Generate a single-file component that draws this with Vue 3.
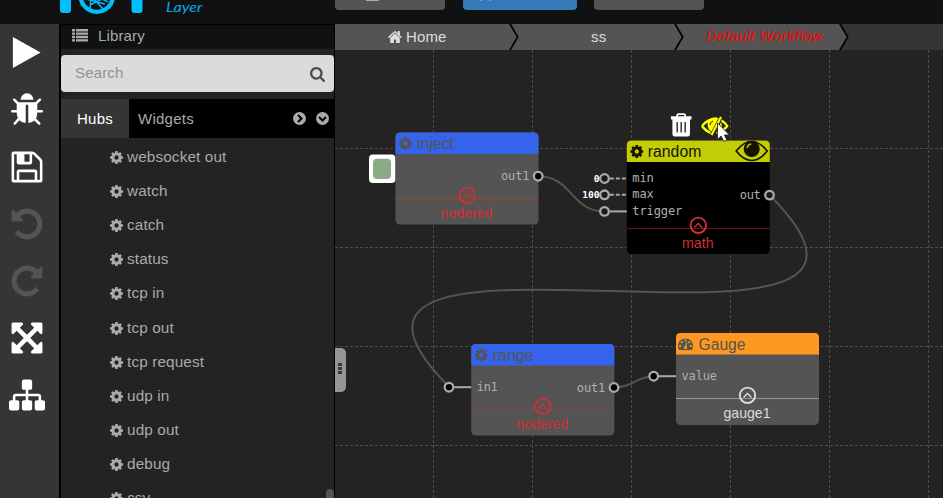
<script setup>
const icons = {
  cog: 'M1152 896q0-106-75-181t-181-75-181 75-75 181 75 181 181 75 181-75 75-181zm512-109v222q0 12-8 23t-20 13l-185 28q-19 54-39 91 35 50 107 138 10 12 10 25t-9 23q-27 37-99 108t-94 71q-12 0-26-9l-138-108q-44 23-91 38-16 136-29 186-7 28-36 28h-222q-14 0-24.5-8.5t-11.5-21.5l-28-184q-49-16-90-37l-141 107q-10 9-25 9-14 0-25-11-126-114-165-168-7-10-7-23 0-12 8-23 15-21 51-66.5t54-70.5q-27-50-41-99l-183-27q-13-2-21-12.5t-8-23.5v-222q0-12 8-23t19-13l186-28q14-46 39-92-40-57-107-138-10-12-10-24 0-10 9-23 26-36 98.5-107.5t94.5-71.5q13 0 26 10l138 107q44-23 91-38 16-136 29-186 7-28 36-28h222q14 0 24.5 8.5t11.5 21.5l28 184q49 16 90 37l142-107q9-9 24-9 13 0 25 10 129 119 165 170 7 8 7 22 0 12-8 23-15 21-51 66.5t-54 70.5q26 50 41 98l183 28q13 2 21 12.5t8 23.5z',
  home: 'M1472 992v480q0 26-19 45t-45 19h-384v-384h-256v384h-384q-26 0-45-19t-19-45v-480q0-1 .5-3t.5-3l575-474 575 474q1 2 1 6zm223-69l-62 74q-8 9-21 11h-3q-13 0-21-7l-692-577-692 577q-12 8-24 7-13-2-21-11l-62-74q-8-10-7-23.5t11-21.5l719-599q32-26 76-26t76 26l244 204v-195q0-14 9-23t23-9h192q14 0 23 9t9 23v408l219 182q10 8 11 21.5t-7 23.5z',
  search: 'M1216 832q0-185-131.5-316.5t-316.5-131.5-316.5 131.5-131.5 316.5 131.5 316.5 316.5 131.5 316.5-131.5 131.5-316.5zm512 832q0 52-38 90t-90 38q-54 0-90-38l-343-342q-179 124-399 124-143 0-273.5-55.5t-225-150-150-225-55.5-273.5 55.5-273.5 150-225 225-150 273.5-55.5 273.5 55.5 225 150 150 225 55.5 273.5q0 220-124 399l343 343q37 37 37 90z',
  gauge: 'M384 1152q0-53-37.5-90.5t-90.5-37.5-90.5 37.5-37.5 90.5 37.5 90.5 90.5 37.5 90.5-37.5 37.5-90.5zm192-448q0-53-37.5-90.5t-90.5-37.5-90.5 37.5-37.5 90.5 37.5 90.5 90.5 37.5 90.5-37.5 37.5-90.5zm428 481l101-382q6-26-7.5-48.5t-38.5-29.5-48 6.5-30 39.5l-101 382q-60 5-107 43.5t-63 98.5q-20 77 20 146t117 89 146-20 89-117q16-60-6-117t-72-91zm660-33q0-53-37.5-90.5t-90.5-37.5-90.5 37.5-37.5 90.5 37.5 90.5 90.5 37.5 90.5-37.5 37.5-90.5zm-640-640q0-53-37.5-90.5t-90.5-37.5-90.5 37.5-37.5 90.5 37.5 90.5 90.5 37.5 90.5-37.5 37.5-90.5zm448 192q0-53-37.5-90.5t-90.5-37.5-90.5 37.5-37.5 90.5 37.5 90.5 90.5 37.5 90.5-37.5 37.5-90.5zm320 448q0 261-141 483-19 29-54 29h-1402q-35 0-54-29-141-221-141-483 0-182 71-348t191-286 286-191 348-71 348 71 286 191 191 286 71 348z',
}

const undoPath = 'M1664 896q0 156-61 298t-164 245-245 164-298 61q-172 0-327-72.5t-264-204.5q-7-10-6.5-22.5t8.5-20.5l137-138q10-9 25-9 16 2 23 12 73 95 179 147t225 52q104 0 198.5-40.5t163.5-109.5 109.5-163.5 40.5-198.5-40.5-198.5-109.5-163.5-163.5-109.5-198.5-40.5q-98 0-188 35.5t-160 101.5l137 138q31 30 14 69-17 40-59 40h-448q-26 0-45-19t-19-45v-448q0-42 40-59 39-17 69 14l130 129q107-101 244.5-156.5t284.5-55.5q156 0 298 61t245 164 164 245 61 298z'

const tools = [
  { name: 'play', path: 'M110 0L1710 896L110 1792z' },
  { name: 'bug', path: 'M1696 960q0 26-19 45t-45 19h-224q0 171-67 290l208 209q19 19 19 45t-19 45q-18 19-45 19t-45-19l-198-197q-5 5-15 13t-42 28.5-65 36.5-82 29-97 13v-896h-128v896q-51 0-101.5-13.5t-87-33-66-39-43.5-32.5l-15-14-183 207q-20 21-48 21-24 0-43-16-19-18-20.5-44.5t15.5-46.5l202-227q-58-114-58-274h-224q-26 0-45-19t-19-45 19-45 45-19h224v-294l-173-173q-19-19-19-45t19-45 45-19 45 19l173 173h844l173-173q19-19 45-19t45 19 19 45-19 45l-173 173v294h224q26 0 45 19t19 45zm-480-576h-640q0-133 93.5-226.5t226.5-93.5 226.5 93.5 93.5 226.5z' },
  { name: 'save', path: 'M512 1536h768v-384h-768v384zm896 0h128v-896q0-14-10-38.5t-20-34.5l-281-281q-10-10-34-20t-39-10v416q0 40-28 68t-68 28h-576q-40 0-68-28t-28-68v-416h-128v1280h128v-416q0-40 28-68t68-28h832q40 0 68 28t28 68v416zm-384-928v-320q0-13-9.5-22.5t-22.5-9.5h-192q-13 0-22.5 9.5t-9.5 22.5v320q0 13 9.5 22.5t22.5 9.5h192q13 0 22.5-9.5t9.5-22.5zm640 32v928q0 40-28 68t-68 28h-1344q-40 0-68-28t-28-68v-1344q0-40 28-68t68-28h928q40 0 88 20t76 48l280 280q28 28 48 76t20 88z' },
  { name: 'undo', path: undoPath, off: true },
  { name: 'redo', path: undoPath, off: true, flip: true },
  { name: 'expand', path: 'M1411 541l-355 355 355 355 144-144q29-31 70-14 39 17 39 59v448q0 26-19 45t-45 19h-448q-42 0-59-40-17-39 14-69l144-144-355-355-355 355 144 144q31 30 14 69-17 40-59 40h-448q-26 0-45-19t-19-45v-448q0-42 40-59 39-17 69 14l144 144 355-355-355-355-144 144q-19 19-45 19-12 0-24-5-40-17-40-59v-448q0-26 19-45t45-19h448q42 0 59 40 17 39-14 69l-144 144 355 355 355-355-144-144q-31-30-14-69 17-40 59-40h448q26 0 45 19t19 45v448q0 42-39 59-13 5-25 5-26 0-45-19z' },
  { name: 'sitemap', path: 'M1792 1248v320q0 40-28 68t-68 28h-320q-40 0-68-28t-28-68v-320q0-40 28-68t68-28h96v-192h-512v192h96q40 0 68 28t28 68v320q0 40-28 68t-68 28h-320q-40 0-68-28t-28-68v-320q0-40 28-68t68-28h96v-192h-512v192h96q40 0 68 28t28 68v320q0 40-28 68t-68 28h-320q-40 0-68-28t-28-68v-320q0-40 28-68t68-28h96v-192q0-52 38-90t90-38h512v-192h-96q-40 0-68-28t-28-68v-320q0-40 28-68t68-28h320q40 0 68 28t28 68v320q0 40-28 68t-68 28h-96v192h512q52 0 90 38t38 90v192h96q40 0 68 28t28 68z' },
]

const hubs = ['websocket out', 'watch', 'catch', 'status', 'tcp in', 'tcp out', 'tcp request', 'udp in', 'udp out', 'debug', 'csv']

// Canvas coordinates: the origin is the top left corner of the workflow area.
const columns = [98.5, 197.5, 296.5, 395.5, 494.5, 593.5]
const rows = [98.5, 197.5, 296.5, 395.5]

const wires = [
  'M203.5 126.2C236.5 126.2 236.5 161.5 269.5 161.5',
  'M434.5 145C641.5 352 -92.5 130 114.5 337.2',
  'M279.5 337.2C299.5 337.2 299.5 326.5 319 326.5',
]

const nodes = [
  { id: 'inject', x: 60.5, y: 82.5, h: 92, head: '#3563eb', body: '#545454', ink: '#545454', icon: 'cog', labelW: 37, labelX: 21.5,
    sub: 'nodered', subW: 52, accent: '#d32f32', rule: '#a8402f', line: 66, ins: [], outs: [{ label: 'out1', y: 43.7, w: 28.5 }], dot: '#000' },
  { id: 'random', x: 291.8, y: 90.5, h: 113.5, head: '#c3cd06', body: '#000', ink: '#141400', icon: 'cog', labelW: 53.5, labelX: 21,
    sub: 'math', subW: 31.5, accent: '#d32f32', rule: '#6b1517', line: 88,
    ins: [{ label: 'min', y: 38.3, w: 21.5, value: '0', dash: true }, { label: 'max', y: 54.6, w: 21.5, value: '100', dash: true }, { label: 'trigger', y: 71.2, w: 50 }],
    outs: [{ label: 'out', y: 54.6, w: 21 }], dot: '#1b1b1b' },
  { id: 'range', x: 136.3, y: 294, h: 91.5, head: '#3563eb', body: '#545454', ink: '#545454', icon: 'cog', labelW: 40.5, labelX: 21.5,
    sub: 'nodered', subW: 52, accent: '#d32f32', rule: '#8e4040', line: 65.5, ins: [{ label: 'in1', y: 43.5, w: 21 }], outs: [{ label: 'out1', y: 43.5, w: 28.5 }], dot: '#000' },
  { id: 'Gauge', x: 341, y: 283, h: 92, head: '#ff9820', body: '#545454', ink: '#545454', icon: 'gauge', labelW: 47, labelX: 22.5,
    sub: 'gauge1', subW: 47, accent: '#dcdcdc', rule: '#969696', line: 65.5, ins: [{ label: 'value', y: 43.5, w: 35.5 }], outs: [], dot: '#000' },
]

const crumbs = [
  { label: 'Home', icon: true, cls: 'crumb-home' },
  { label: 'ss', cls: 'crumb-mid' },
  { label: 'Default Workflow', cls: 'crumb-current' },
]
</script>

<template>
  <div class="app">
    <header class="topbar">
      <svg class="logo" width="150" height="24" viewBox="0 0 150 24">
        <path d="M0-5H11V10Q11 13 8 13H3Q0 13 0 10zM71.5-5H82.5V10Q82.5 13 79.500 13H74.500Q71.500 13 71.500 10z" fill="#00bfff" />
        <circle cx="36.800" cy="-4.500" r="16.300" fill="none" stroke="#00bfff" stroke-width="4.300" />
        <path d="M26-1L45 4M31-2L30 8M30 5L44-2M35 0L43 9M40-2L48 2" fill="none" stroke="#00bfff" stroke-width="1.500" />
        <text class="logo-text" x="106" y="12.300" textLength="36.500" lengthAdjust="spacingAndGlyphs">Layer</text>
      </svg>
      <div class="actions">
        <div class="action"><i class="action-mark"></i></div>
        <div class="action primary"><i></i><i></i></div>
        <div class="action"></div>
      </div>
    </header>

    <div class="main">
      <nav class="tools">
        <svg v-for="t in tools" :key="t.name" class="tool" :class="{ off: t.off, flip: t.flip }" viewBox="0 0 1792 1792">
          <path :d="t.path" />
        </svg>
      </nav>

      <aside class="library">
        <div class="lib-head">
          <svg width="16" height="13" viewBox="0 0 16 13"><path d="M0 0h3v2.400H0zM4 0h12v2.400H4zM0 3.400h3v2.400H0zM4 3.400h12v2.400H4zM0 6.800h3v2.400H0zM4 6.800h12v2.400H4zM0 10.200h3v2.200H0zM4 10.200h12v2.200H4z" fill="#aaa" /></svg>
          <span>Library</span>
        </div>
        <div class="search">
          <span>Search</span>
          <svg width="15" height="15" viewBox="64 128 1664 1664"><path :d="icons.search" fill="#4c4c4c" /></svg>
        </div>
        <div class="tabs">
          <div class="tab active">Hubs</div>
          <div class="tab">Widgets</div>
          <div class="tab-actions">
            <svg width="13" height="13" viewBox="0 0 13 13"><circle cx="6.500" cy="6.500" r="6.500" fill="#aaa" /><path d="M5 3L8.500 6.500L5 10" /></svg>
            <svg width="13" height="13" viewBox="0 0 13 13"><circle cx="6.500" cy="6.500" r="6.500" fill="#aaa" /><path d="M3 5L6.500 8.500L10 5" /></svg>
          </div>
        </div>
        <div class="hubs">
          <div v-for="h in hubs" :key="h" class="hub">
            <svg width="13" height="13" viewBox="128 128 1536 1536"><path :d="icons.cog" fill="#aaa" /></svg>
            <span>{{ h }}</span>
          </div>
          <div class="thumb"></div>
        </div>
      </aside>

      <section class="workspace">
        <div class="crumbs">
          <div v-for="c in crumbs" :key="c.label" class="crumb" :class="c.cls">
            <svg v-if="c.icon" width="14" height="12" viewBox="64 250 1664 1290" preserveAspectRatio="none"><path :d="icons.home" fill="#ddd" /></svg>
            <span>{{ c.label }}</span>
            <svg class="arrow" width="10" height="26" viewBox="0 0 10 26"><path class="arrow-fill" d="M0 0L8 13L0 26z" /><path class="arrow-line" d="M.5-1L8.700 13L.5 27" /></svg>
          </div>
        </div>

        <div class="canvas">
          <svg width="608" height="448" viewBox="0 0 608 448">
            <g class="grid">
              <line v-for="x in columns" :key="'c' + x" :x1="x" :x2="x" y1="0" y2="448" />
              <line v-for="y in rows" :key="'r' + y" x1="0" x2="608" :y1="y" :y2="y" />
            </g>
            <path v-for="w in wires" :key="w" class="wire" :d="w" />

            <rect x="34" y="104.500" width="26.500" height="28.500" rx="4" fill="#fff" />
            <rect x="38" y="108.800" width="18" height="20.200" rx="4" fill="#8aab85" />

            <g v-for="n in nodes" :key="n.id" :transform="`translate(${n.x} ${n.y})`">
              <rect width="143" :height="n.h" rx="4.500" :fill="n.body" />
              <path d="M0 21.500V4.500Q0 0 4.500 0H138.500Q143 0 143 4.500V21.500z" :fill="n.head" />
              <svg v-if="n.icon === 'cog'" x="3.500" y="4.500" width="13" height="13" viewBox="128 128 1536 1536"><path :d="icons.cog" :fill="n.ink" /></svg>
              <svg v-else x="2" y="5.300" width="15" height="12" viewBox="0 256 1792 1408"><path :d="icons.gauge" :fill="n.ink" /></svg>
              <text class="name" :x="n.labelX" y="16.800" :fill="n.ink" :textLength="n.labelW" lengthAdjust="spacingAndGlyphs">{{ n.id }}</text>

              <line x1="0" x2="143" :y1="n.line" :y2="n.line" :stroke="n.rule" />
              <circle cx="71.500" :cy="n.line - 3.200" r="7.700" fill="none" :stroke="n.accent" stroke-width="1.900" />
              <path :transform="`translate(71.500 ${n.line - 3})`" d="M-4 2L0-2L4 2" fill="none" :stroke="n.accent" stroke-width="1.300" />
              <text class="sub" x="71" :y="n.line + 19" :fill="n.accent" :textLength="n.subW" lengthAdjust="spacingAndGlyphs">{{ n.sub }}</text>

              <g v-for="p in n.ins" :key="p.label">
                <line x1="-17" x2="0" :y1="p.y - .3" :y2="p.y - .3" stroke="#aaa" stroke-width="2" :stroke-dasharray="p.dash ? '4 2' : null" />
                <circle class="port" cx="-22.300" :cy="p.y - .3" r="4.300" :fill="n.dot" />
                <text class="port-label" x="5.500" :y="p.y + 3.200" :textLength="p.w">{{ p.label }}</text>
                <text v-if="p.value" class="value" x="-27.300" :y="p.y + 3.200">{{ p.value }}</text>
              </g>
              <g v-for="p in n.outs" :key="p.label">
                <circle class="port" cx="142.700" :cy="p.y" r="4.300" :fill="n.dot" />
                <text class="port-label end" x="134" :y="p.y + 4" :textLength="p.w">{{ p.label }}</text>
              </g>
            </g>

            <g transform="translate(346.200 75)">
              <path d="M-4-8V-9.500Q-4-10.800-2.700-10.800H2.700Q4-10.800 4-9.500V-8" fill="none" stroke="#fff" stroke-width="1.800" />
              <path d="M-10.300-8.700H10.300V-5.500H8.800V9Q8.800 11.500 6.500 11.500H-6.500Q-8.800 11.500-8.800 9V-5.500H-10.300z" fill="#fff" />
              <path d="M-4-3V7.500M0-3V7.500M4-3V7.500" stroke="#444" stroke-width="1.600" />
            </g>

            <g transform="translate(416.700 101)">
              <path d="M-15.500 0Q-8-9.500 0-9.500T15.500 0Q8 9.500 0 9.500T-15.500 0z" fill="none" stroke="#141400" stroke-width="1.700" />
              <circle cy="-2" r="8" fill="#141400" />
              <path d="M-4.500-3Q-4-6.500-.5-7" fill="none" stroke="#c3cd06" stroke-width="1.500" />
            </g>

            <g transform="translate(379.500 76)" fill="none" stroke="#ff0">
              <path d="M-12.500 0Q-6-7.500 2-7.500M-12.500 0Q-9 5-4 6.800M7-5.500Q11-3 12.800 0Q9 5 2 7" stroke-width="2.300" />
              <path d="M-6.500-5Q-8 3-3 5.500L4-8Q-3-9-6.500-5z" fill="#ff0" stroke="none" />
              <path d="M-4.500-1Q-4.500-4-1.500-5" stroke="#222" stroke-width="1" />
              <path d="M6.500-9L-3 9" stroke-width="2.200" />
              <path d="M6-3Q8 1 4 4" stroke-width="1.500" />
            </g>
            <path d="M382.500 73V89.500L386.200 86L388.800 91.500L391.800 90L389.300 85H394.500z" fill="#fff" stroke="#222" stroke-width=".8" />
          </svg>
          <div class="handle"><i></i><i></i><i></i></div>
        </div>
      </section>
    </div>
  </div>
</template>

<style>
body { overflow: hidden; background: #222; }
</style>

<style scoped>
.app { width: 943px; height: 498px; overflow: hidden; display: flex; flex-direction: column; font-family: "Liberation Sans", Arial, sans-serif; font-size: 15px; color: #aaa; background: #232323; }
.topbar { height: 24px; flex: none; display: flex; background: #111; padding-left: 60px; }
.logo { flex: none; width: 150px; margin-right: 125px; }
.logo-text { font: italic 13.3px Lato, sans-serif; fill: #00aee8; }
.actions { display: flex; height: 10px; }
.action { width: 110px; height: 10px; border-radius: 0 0 4px 4px; background: #545454; margin-right: 18px; display: flex; }
.action.primary { width: 114px; background: #337ab7; margin-right: 17px; gap: 7px; padding-left: 17px; box-sizing: border-box; }
.action-mark { width: 13px; height: 1px; background: #aaa; margin-left: 31px; }
.primary i { width: 2px; height: 1px; background: #6b9cf0; }
.main { flex: 1; display: flex; min-height: 0; }
.tools { width: 59px; box-sizing: border-box; background: #353535; padding: 11px 0 0 9px; display: flex; flex-direction: column; gap: 21px; }
.tool { width: 36px; height: 36px; flex: none; fill: #fff; }
.tool:first-child { height: 31px; width: 31px; margin: 2px 0 3px 2px; }
.tool.off { fill: #545454; }
.flip { transform: scaleX(-1); }
.library { width: 273px; border: solid #000; border-width: 1px 1px 0 2px; background: #232323; display: flex; flex-direction: column; }
.lib-head { height: 24px; flex: none; background: #111; display: flex; align-items: center; gap: 10px; padding: 0 0 0 11px; letter-spacing: .15px; }
.lib-head svg { margin-top: -3px; }
.lib-head span { margin-top: -3px; }
.search { height: 37px; flex: none; margin-top: 6px; border-radius: 4px; background: #dbdbdb; display: flex; align-items: center; justify-content: space-between; padding: 0 9px 0 14px; color: #929292; letter-spacing: .15px; }
.search span { margin-top: -2px; }
.search svg { margin-top: 1px; }
.tabs { height: 39px; flex: none; margin-top: 7px; background: #000; display: flex; align-items: center; letter-spacing: .25px; }
.tab { padding-left: 9px; line-height: 39px; }
.tab.active { width: 68px; padding: 0; text-align: center; background: #353535; color: #fff; }
.tab-actions { margin: 0 5px 0 auto; display: flex; gap: 10px; }
.tab-actions path { fill: none; stroke: #000; stroke-width: 2; }
.hubs { flex: 1; min-height: 0; padding: 2px 0 0 48.500px; overflow: hidden; position: relative; }
.hub { height: 34.2px; display: flex; align-items: center; gap: 4.500px; font-size: 15.3px; letter-spacing: .13px; }
.hub span { margin-top: -1px; }
.thumb { position: absolute; right: 0; bottom: 0; width: 8px; height: 9px; background: #545454; border-radius: 4px 4px 0 0; }
.workspace { width: 608px; display: flex; flex-direction: column; }
.crumbs { height: 26px; background: #353535; display: flex; }
.crumb { position: relative; box-sizing: border-box; height: 26px; background: #545454; color: #ddd; display: flex; align-items: center; gap: 4px; letter-spacing: .15px; }
.crumb span { margin-top: -2px; }
.crumb-home { width: 174px; padding-left: 53px; }
.crumb-mid { width: 165px; padding-left: 82px; }
.crumb-current { width: 165px; padding-left: 32px; color: #f00; font-style: italic; font-size: 14.5px; letter-spacing: .45px; }
.arrow { position: absolute; left: 100%; top: 0; z-index: 2; }
.arrow-fill { fill: #545454; }
.arrow-line { fill: none; stroke: #000; stroke-width: 1.7; }
.canvas { position: relative; flex: 1; }
.canvas > svg { display: block; }
.grid line { stroke: #4d4d4d; stroke-dasharray: 3 2; }
.wire { fill: none; stroke: #545454; stroke-width: 2; }
.name { font-size: 16px; }
.sub { font-size: 14.5px; text-anchor: middle; }
.port { stroke: #aaa; stroke-width: 2.3; }
.port-label { font: 12px "DejaVu Sans Mono", monospace; fill: #b0b0b0; }
.end, .value { text-anchor: end; }
.value { font: bold 9.5px "DejaVu Sans Mono", monospace; fill: #fff; }
.handle { position: absolute; left: 0; top: 298px; width: 11px; height: 44px; box-sizing: border-box; border-radius: 0 5px 5px 0; background: #959595; display: flex; flex-direction: column; gap: 1px; padding: 15px 0 0 3px; }
.handle i { width: 4px; height: 3px; background: #393939; }
</style>
